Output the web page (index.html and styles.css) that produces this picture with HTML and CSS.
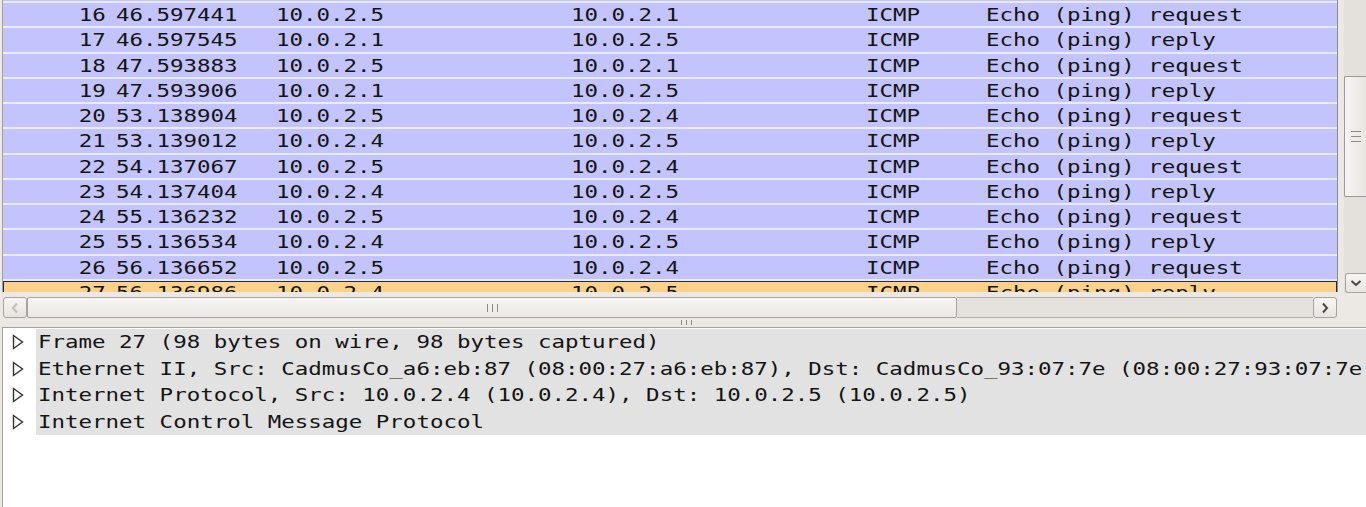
FILE: index.html
```html
<!DOCTYPE html>
<html lang="en">
<head>
<meta charset="utf-8">
<title>Wireshark</title>
<link rel="stylesheet" href="styles.css">
</head>
<body>
<div class="app">
  <div class="list-pane">
    <div class="list-main">
      <div class="packet-list">
        <div class="row"><span class="c-no"><span class="t">16</span></span><span class="c-time"><span class="t">46.597441</span></span><span class="c-src"><span class="t">10.0.2.5</span></span><span class="c-dst"><span class="t">10.0.2.1</span></span><span class="c-proto"><span class="t">ICMP</span></span><span class="c-info"><span class="t">Echo (ping) request</span></span></div>
        <div class="row"><span class="c-no"><span class="t">17</span></span><span class="c-time"><span class="t">46.597545</span></span><span class="c-src"><span class="t">10.0.2.1</span></span><span class="c-dst"><span class="t">10.0.2.5</span></span><span class="c-proto"><span class="t">ICMP</span></span><span class="c-info"><span class="t">Echo (ping) reply</span></span></div>
        <div class="row"><span class="c-no"><span class="t">18</span></span><span class="c-time"><span class="t">47.593883</span></span><span class="c-src"><span class="t">10.0.2.5</span></span><span class="c-dst"><span class="t">10.0.2.1</span></span><span class="c-proto"><span class="t">ICMP</span></span><span class="c-info"><span class="t">Echo (ping) request</span></span></div>
        <div class="row"><span class="c-no"><span class="t">19</span></span><span class="c-time"><span class="t">47.593906</span></span><span class="c-src"><span class="t">10.0.2.1</span></span><span class="c-dst"><span class="t">10.0.2.5</span></span><span class="c-proto"><span class="t">ICMP</span></span><span class="c-info"><span class="t">Echo (ping) reply</span></span></div>
        <div class="row"><span class="c-no"><span class="t">20</span></span><span class="c-time"><span class="t">53.138904</span></span><span class="c-src"><span class="t">10.0.2.5</span></span><span class="c-dst"><span class="t">10.0.2.4</span></span><span class="c-proto"><span class="t">ICMP</span></span><span class="c-info"><span class="t">Echo (ping) request</span></span></div>
        <div class="row"><span class="c-no"><span class="t">21</span></span><span class="c-time"><span class="t">53.139012</span></span><span class="c-src"><span class="t">10.0.2.4</span></span><span class="c-dst"><span class="t">10.0.2.5</span></span><span class="c-proto"><span class="t">ICMP</span></span><span class="c-info"><span class="t">Echo (ping) reply</span></span></div>
        <div class="row"><span class="c-no"><span class="t">22</span></span><span class="c-time"><span class="t">54.137067</span></span><span class="c-src"><span class="t">10.0.2.5</span></span><span class="c-dst"><span class="t">10.0.2.4</span></span><span class="c-proto"><span class="t">ICMP</span></span><span class="c-info"><span class="t">Echo (ping) request</span></span></div>
        <div class="row"><span class="c-no"><span class="t">23</span></span><span class="c-time"><span class="t">54.137404</span></span><span class="c-src"><span class="t">10.0.2.4</span></span><span class="c-dst"><span class="t">10.0.2.5</span></span><span class="c-proto"><span class="t">ICMP</span></span><span class="c-info"><span class="t">Echo (ping) reply</span></span></div>
        <div class="row"><span class="c-no"><span class="t">24</span></span><span class="c-time"><span class="t">55.136232</span></span><span class="c-src"><span class="t">10.0.2.5</span></span><span class="c-dst"><span class="t">10.0.2.4</span></span><span class="c-proto"><span class="t">ICMP</span></span><span class="c-info"><span class="t">Echo (ping) request</span></span></div>
        <div class="row"><span class="c-no"><span class="t">25</span></span><span class="c-time"><span class="t">55.136534</span></span><span class="c-src"><span class="t">10.0.2.4</span></span><span class="c-dst"><span class="t">10.0.2.5</span></span><span class="c-proto"><span class="t">ICMP</span></span><span class="c-info"><span class="t">Echo (ping) reply</span></span></div>
        <div class="row"><span class="c-no"><span class="t">26</span></span><span class="c-time"><span class="t">56.136652</span></span><span class="c-src"><span class="t">10.0.2.5</span></span><span class="c-dst"><span class="t">10.0.2.4</span></span><span class="c-proto"><span class="t">ICMP</span></span><span class="c-info"><span class="t">Echo (ping) request</span></span></div>
        <div class="row sel"><span class="c-no"><span class="t">27</span></span><span class="c-time"><span class="t">56.136986</span></span><span class="c-src"><span class="t">10.0.2.4</span></span><span class="c-dst"><span class="t">10.0.2.5</span></span><span class="c-proto"><span class="t">ICMP</span></span><span class="c-info"><span class="t">Echo (ping) reply</span></span></div>
      </div>
      <div class="hscroll">
        <div class="sbtn sbtn-h"><svg class="chev dis" width="8" height="12" viewBox="0 0 8 12"><polyline points="6,1.5 2,6 6,10.5"/></svg></div>
        <div class="hthumb"><span class="grip-v"><i></i><i></i><i></i></span></div>
        <div class="htrough"></div>
        <div class="sbtn sbtn-h"><svg class="chev" width="8" height="12" viewBox="0 0 8 12"><polyline points="2,1.5 6,6 2,10.5"/></svg></div>
      </div>
    </div>
    <div class="vscroll">
      <div class="vthumb"><span class="grip-h"><i></i><i></i><i></i></span></div>
      <div class="vspace"></div>
      <div class="sbtn sbtn-down"><svg class="chev" width="12" height="8" viewBox="0 0 12 8"><polyline points="1.5,2 6,6 10.5,2"/></svg></div>
    </div>
  </div>
  <div class="pane-handle"><span class="grip-v small"><i></i><i></i><i></i></span></div>
  <div class="detail-pane">
    <div class="tree-row"><span class="expander"><svg width="12" height="16" viewBox="0 0 12 16"><polygon points="1.5,1.5 10.5,8 1.5,14.5"/></svg></span><span class="label"><span class="t">Frame 27 (98 bytes on wire, 98 bytes captured)</span></span></div>
    <div class="tree-row"><span class="expander"><svg width="12" height="16" viewBox="0 0 12 16"><polygon points="1.5,1.5 10.5,8 1.5,14.5"/></svg></span><span class="label"><span class="t">Ethernet II, Src: CadmusCo_a6:eb:87 (08:00:27:a6:eb:87), Dst: CadmusCo_93:07:7e (08:00:27:93:07:7e)</span></span></div>
    <div class="tree-row"><span class="expander"><svg width="12" height="16" viewBox="0 0 12 16"><polygon points="1.5,1.5 10.5,8 1.5,14.5"/></svg></span><span class="label"><span class="t">Internet Protocol, Src: 10.0.2.4 (10.0.2.4), Dst: 10.0.2.5 (10.0.2.5)</span></span></div>
    <div class="tree-row"><span class="expander"><svg width="12" height="16" viewBox="0 0 12 16"><polygon points="1.5,1.5 10.5,8 1.5,14.5"/></svg></span><span class="label"><span class="t">Internet Control Message Protocol</span></span></div>
  </div>
</div>
</body>
</html>
```

FILE: styles.css
```css
* { box-sizing: border-box; }
html, body { margin: 0; padding: 0; }
body {
  width: 1366px;
  height: 507px;
  overflow: hidden;
  background: #ece9e5;
  font-family: "DejaVu Sans Mono", "Liberation Mono", monospace;
  font-size: 18px;
  color: #141414;
}
.app {
  display: flex;
  flex-direction: column;
  height: 507px;
  padding-left: 2px;
}
.t {
  display: inline-block;
  transform: scaleX(1.247);
  transform-origin: 0 50%;
  white-space: pre;
}

/* packet list */
.list-pane {
  display: flex;
  align-items: flex-start;
  height: 318px;
  flex: none;
}
.list-main {
  width: 1336px;
  display: flex;
  flex-direction: column;
}
.packet-list {
  height: 292px;
  overflow: hidden;
  padding-top: 1px;
  background: #c2c2ff;
  border-left: 1px solid #a59f97;
  border-right: 1px solid #8f8b86;
}
.row {
  display: grid;
  grid-template-columns: 103px 170px 295px 295px 120px 1fr;
  height: 25.25px;
  border-top: 2px solid #eaeaff;
  line-height: 23px;
  white-space: nowrap;
  background: #c3c3fd;
}
.c-no { text-align: right; }
.c-no .t { transform-origin: 100% 50%; }
.c-time { padding-left: 10px; }
.row.sel {
  background: #fcd28b;
  box-shadow: inset 0 1px 0 #1d2b55, inset 1px 0 0 #1d2b55, inset -1px 0 0 #1d2b55;
}

/* scrollbars */
.sbtn {
  display: flex;
  align-items: center;
  justify-content: center;
  border: 1px solid #a8a39d;
  border-radius: 3px;
  background: linear-gradient(#f7f6f4, #e7e4e0);
}
.chev { fill: none; stroke: #4a4744; stroke-width: 2; }
.chev.dis { stroke: #c2bdb7; }
.hscroll {
  display: flex;
  height: 21px;
  margin-top: 5px;
  padding: 0 1px;
}
.sbtn-h { width: 24px; flex: none; }
.hthumb {
  width: 930px;
  flex: none;
  display: flex;
  align-items: center;
  justify-content: center;
  border: 1px solid #a8a39d;
  border-radius: 2px;
  background: linear-gradient(#f6f5f3, #ebe8e5);
}
.htrough {
  flex: 1;
  background: #e5e2de;
  border-top: 1px solid #b4afa9;
  border-bottom: 1px solid #b4afa9;
}
.grip-v { display: flex; gap: 4px; }
.grip-v i { display: block; width: 1px; height: 8px; background: #8d8984; }
.grip-v.small i { height: 5px; }
.grip-h { display: flex; flex-direction: column; gap: 4px; }
.grip-h i { display: block; width: 10px; height: 1px; background: #8d8984; }

.vscroll {
  margin-left: 6px;
  width: 22px;
  height: 293px;
  flex: none;
  display: flex;
  flex-direction: column;
  background: #e4e1dd;
}
.vthumb {
  margin-top: 76px;
  height: 121px;
  flex: none;
  display: flex;
  align-items: center;
  justify-content: center;
  border: 1px solid #9e9994;
  border-right: none;
  border-radius: 2px 0 0 2px;
  background: linear-gradient(90deg, #f6f5f3, #e8e5e1);
}
.vspace { flex: 1; }
.sbtn-down {
  height: 20px;
  margin-left: 1px;
  border-right: none;
  border-radius: 3px 0 0 3px;
}

/* pane handle */
.pane-handle {
  height: 9px;
  flex: none;
  display: flex;
  justify-content: center;
  padding: 2px 0 0 4px;
}

/* detail tree */
.detail-pane {
  flex: 1;
  background: #fff;
  border-top: 1px solid #a6a19a;
  border-left: 1px solid #a6a19a;
  padding-top: 1px;
}
.tree-row {
  display: flex;
  height: 26.5px;
  line-height: 26.5px;
  white-space: nowrap;
}
.expander {
  width: 33px;
  flex: none;
  display: flex;
  align-items: center;
  padding-left: 8.5px;
}
.expander polygon { fill: none; stroke: #333; stroke-width: 1.4; stroke-linejoin: miter; }
.label {
  flex: 1;
  background: #e2e2e2;
  padding-left: 2px;
}
```
